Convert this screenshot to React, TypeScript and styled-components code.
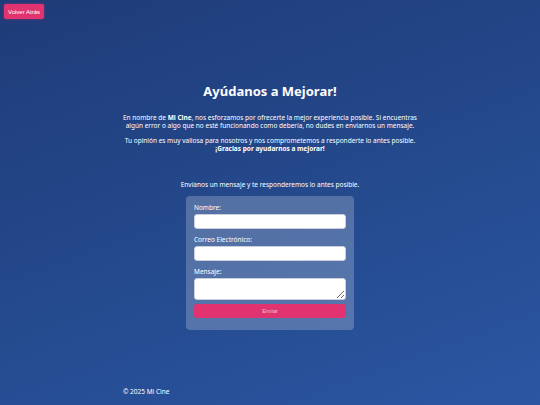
import styled, { createGlobalStyle } from 'styled-components';

const GlobalStyle = createGlobalStyle`
  html, body {
    margin: 0;
    padding: 0;
  }
  body {
    font-family: "Noto Sans", "DejaVu Sans", sans-serif;
    background: linear-gradient(160deg, #1f3b78 0%, #24498c 50%, #2a56a2 100%);
    min-height: 405px;
    color: #ffffff;
  }
`;

const Page = styled.div`
  position: relative;
  width: 540px;
  height: 405px;
  overflow: hidden;
`;

const BackButton = styled.button`
  position: absolute;
  top: 4px;
  left: 4px;
  height: 15px;
  padding: 0 4px;
  border: none;
  border-radius: 2px;
  background: #e0336f;
  color: #ffffff;
  font-family: "Liberation Sans", Arial, sans-serif;
  font-size: 6px;
  box-shadow: 0 0 3px rgba(224, 51, 111, 0.5);
`;

const Main = styled.main`
  width: 300px;
  margin: 0 auto;
  padding-top: 82px;
  display: flex;
  flex-direction: column;
  align-items: center;
`;

const Title = styled.h1`
  margin: 0;
  font-size: 13px;
  font-weight: 700;
  line-height: 18px;
`;

const Text = styled.p`
  margin: 14px 0 0 0;
  font-size: 6.5px;
  line-height: 8px;
  text-align: center;
  & + & {
    margin-top: 7px;
  }
`;

const Subtitle = styled.p`
  margin: 28px 0 0 0;
  font-size: 6.5px;
  line-height: 8px;
  text-align: center;
`;

const Card = styled.form`
  margin-top: 7px;
  width: 168px;
  box-sizing: border-box;
  padding: 7px 8px 12px 8px;
  border-radius: 4px;
  background: rgba(255, 255, 255, 0.22);
  display: flex;
  flex-direction: column;
`;

const Label = styled.label`
  font-size: 6.5px;
  line-height: 9px;
  margin-bottom: 2px;
`;

const Input = styled.input`
  height: 15px;
  box-sizing: border-box;
  border: 1px solid #c9cfdc;
  border-radius: 3px;
  background: #ffffff;
  margin-bottom: 6px;
`;

const Area = styled.textarea`
  height: 22px;
  box-sizing: border-box;
  border: 1px solid #c9cfdc;
  border-radius: 3px;
  background: #ffffff;
  margin: 0 0 4px 0;
  resize: vertical;
`;

const Submit = styled.button`
  height: 14px;
  border: none;
  border-radius: 3px;
  background: #e0336f;
  color: #f3c2d2;
  font-family: "Liberation Sans", Arial, sans-serif;
  font-size: 5.5px;
`;

const Footer = styled.footer`
  width: 294px;
  margin: 0 auto;
  padding-top: 58px;
  font-size: 6.5px;
  line-height: 8px;
`;

export default function App() {
  return (
    <Page>
      <GlobalStyle />
      <BackButton>Volver Atrás</BackButton>
      <Main>
        <Title>Ayúdanos a Mejorar!</Title>
        <Text>
          En nombre de <b>Mi Cine</b>, nos esforzamos por ofrecerte la mejor experiencia posible. Si encuentras
          algún error o algo que no esté funcionando como debería, no dudes en enviarnos un mensaje.
        </Text>
        <Text>
          Tu opinión es muy valiosa para nosotros y nos comprometemos a responderte lo antes posible.
          <br />
          <b>¡Gracias por ayudarnos a mejorar!</b>
        </Text>
        <Subtitle>Envíanos un mensaje y te responderemos lo antes posible.</Subtitle>
        <Card onSubmit={e => e.preventDefault()}>
          <Label>Nombre:</Label>
          <Input type="text" />
          <Label>Correo Electrónico:</Label>
          <Input type="email" />
          <Label>Mensaje:</Label>
          <Area />
          <Submit type="submit">Enviar</Submit>
        </Card>
      </Main>
      <Footer>© 2025 Mi Cine</Footer>
    </Page>
  );
}
